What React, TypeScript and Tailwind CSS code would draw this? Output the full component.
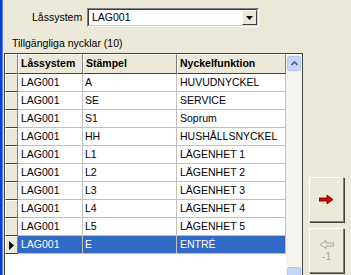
import React from "react";

const rows = [
  ["LAG001", "A", "HUVUDNYCKEL"],
  ["LAG001", "SE", "SERVICE"],
  ["LAG001", "S1", "Soprum"],
  ["LAG001", "HH", "HUSHÅLLSNYCKEL"],
  ["LAG001", "L1", "LÄGENHET 1"],
  ["LAG001", "L2", "LÄGENHET 2"],
  ["LAG001", "L3", "LÄGENHET 3"],
  ["LAG001", "L4", "LÄGENHET 4"],
  ["LAG001", "L5", "LÄGENHET 5"],
  ["LAG001", "E", "ENTRÉ"],
];

const font = { fontFamily: '"Liberation Sans", Arial, sans-serif' };

function HeaderCell({ w, children }: { w: string; children?: React.ReactNode }) {
  return (
    <div
      className={`${w} h-full flex items-center pl-[2px] font-bold bg-[#ECE9D8] border-t border-l border-t-white border-l-white border-r border-b border-r-[#808080] border-b-[#404040] overflow-hidden whitespace-nowrap`}
    >
      {children}
    </div>
  );
}

export default function App() {
  return (
    <div
      className="w-[351px] h-[275px] overflow-hidden bg-[#ECE9D8] flex text-[10.5px] text-black"
      style={font}
    >
      <div className="w-[3px] h-full bg-[#0B3FCB] border-r border-r-[#4F7FE8] shrink-0" />
      <div className="flex flex-col pl-[1px] shrink-0">
        <div className="flex items-center h-[19px] mt-[8px] shrink-0">
          <span className="ml-[28px] w-[55px]">Låssystem</span>
          <div className="w-[172px] h-[19px] bg-white flex items-center border border-t-[#808080] border-l-[#808080] border-r-white border-b-white">
            <div className="flex-1 h-full flex items-center pl-[3px] border border-t-[#404040] border-l-[#404040] border-r-[#D4D0C8] border-b-[#D4D0C8]">
              <span className="flex-1">LAG001</span>
              <div className="w-[15px] h-full bg-[#ECE9D8] flex items-center justify-center border border-t-white border-l-white border-r-[#404040] border-b-[#404040]">
                <svg width="7" height="4" viewBox="0 0 7 4">
                  <polygon points="0,0 7,0 3.5,4" fill="#000" />
                </svg>
              </div>
            </div>
          </div>
        </div>
        <div className="ml-[8px] mt-[9px] h-[14px] leading-[14px] shrink-0">Tillgängliga nycklar (10)</div>
        <div className="mt-[3px] w-[299px] h-[232px] shrink-0 bg-white border border-[#404040] flex">
          <div className="flex flex-col w-[281px]">
            <div className="flex h-[20px]">
              <HeaderCell w="w-[13px]" />
              <HeaderCell w="w-[65px]">Låssystem</HeaderCell>
              <HeaderCell w="w-[94px]">Stämpel</HeaderCell>
              <HeaderCell w="w-[109px]">Nyckelfunktion</HeaderCell>
            </div>
            {rows.map((r, i) => {
              const sel = i === rows.length - 1;
              return (
                <div key={i} className="flex h-[18px]">
                  <div className="w-[13px] h-full bg-[#ECE9D8] border-t border-l border-t-white border-l-white border-r border-b border-r-[#808080] border-b-[#404040] flex items-center justify-center">
                    {sel && (
                      <svg width="5" height="9" viewBox="0 0 5 9">
                        <polygon points="0,0 5,4.5 0,9" fill="#000" />
                      </svg>
                    )}
                  </div>
                  {r.map((c, j) => (
                    <div
                      key={j}
                      className={`${j === 0 ? "w-[65px] pl-[3px]" : j === 1 ? "w-[94px] pl-[2px]" : "w-[109px] pl-[3px]"} h-full flex items-center border-r border-b border-r-[#C0C0C0] border-b-[#C0C0C0] whitespace-nowrap ${sel ? "bg-[#316AC5] text-white" : ""}`}
                    >
                      {c}
                    </div>
                  ))}
                </div>
              );
            })}
          </div>
          <div className="w-[16px] h-full bg-[#F5F4EE] flex flex-col pt-[2px] pl-[1px]">
            <div className="w-[14px] h-[15px] bg-[#C6D5FB] border border-[#B4C8F5] rounded-[2px] flex items-center justify-center">
              <svg width="7" height="5" viewBox="0 0 7 5">
                <polyline points="0.5,4 3.5,1 6.5,4" fill="none" stroke="#4D6185" strokeWidth="1.6" />
              </svg>
            </div>
            <div className="flex-1" />
            <div className="w-[14px] h-[15px] bg-[#C6D5FB] border border-[#B4C8F5] rounded-[2px] mb-[2px]" />
          </div>
        </div>
      </div>
      <div className="flex flex-col pl-[6px] pt-[177px] gap-[6px]">
        <div className="w-[35px] h-[45px] bg-[#ECE9D8] border border-t-white border-l-white border-r-[#808080] border-b-[#808080] shadow-[1px_1px_0_#404040] flex items-center justify-center">
          <svg width="15" height="9" viewBox="0 0 15 9">
            <polygon points="0,3 8,3 8,0 14,4.5 8,9 8,6 0,6" fill="#E00000" stroke="#600000" strokeWidth="0.8" />
          </svg>
        </div>
        <div className="w-[35px] h-[45px] bg-[#ECE9D8] border border-t-white border-l-white border-r-[#808080] border-b-[#808080] shadow-[1px_1px_0_#404040] flex flex-col items-center justify-center gap-[3px]">
          <svg width="15" height="9" viewBox="0 0 15 9">
            <polygon points="14.5,3 7,3 7,0.5 1,4.5 7,8.5 7,6 14.5,6" fill="none" stroke="#ACA899" strokeWidth="1" />
          </svg>
          <span className="text-[#ACA899] text-[10px] leading-[10px]">-1</span>
        </div>
      </div>
    </div>
  );
}
